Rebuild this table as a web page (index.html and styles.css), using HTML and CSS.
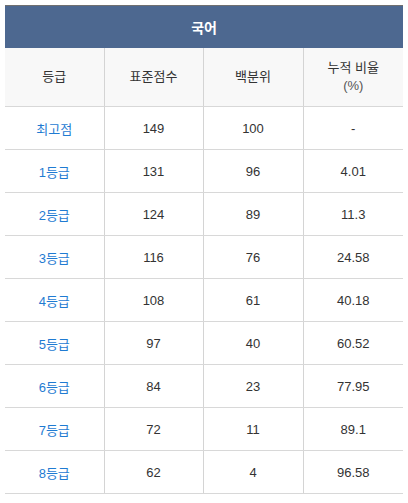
FILE: index.html
```html
<!DOCTYPE html>
<html lang="ko">
<head>
<meta charset="utf-8">
<link rel="stylesheet" href="styles.css">
</head>
<body>
<div class="wrap">
<table class="grade">
  <colgroup><col class="c1"><col class="c2"><col class="c3"><col class="c4"></colgroup>
  <thead>
    <tr class="title"><th colspan="4">국어</th></tr>
    <tr class="heads">
      <th>등급</th><th>표준점수</th><th>백분위</th><th>누적 비율<br><span class="pct">(%)</span></th>
    </tr>
  </thead>
  <tbody>
    <tr><td class="lv">최고점</td><td>149</td><td>100</td><td>-</td></tr>
    <tr><td class="lv">1등급</td><td>131</td><td>96</td><td>4.01</td></tr>
    <tr><td class="lv">2등급</td><td>124</td><td>89</td><td>11.3</td></tr>
    <tr><td class="lv">3등급</td><td>116</td><td>76</td><td>24.58</td></tr>
    <tr><td class="lv">4등급</td><td>108</td><td>61</td><td>40.18</td></tr>
    <tr><td class="lv">5등급</td><td>97</td><td>40</td><td>60.52</td></tr>
    <tr><td class="lv">6등급</td><td>84</td><td>23</td><td>77.95</td></tr>
    <tr><td class="lv">7등급</td><td>72</td><td>11</td><td>89.1</td></tr>
    <tr><td class="lv">8등급</td><td>62</td><td>4</td><td>96.58</td></tr>
  </tbody>
</table>
</div>
</body>
</html>
```
FILE: styles.css
```css
html, body { margin: 0; padding: 0; background: #fff; }
.wrap { padding: 5px; }
.grade {
  width: 398px;
  border-collapse: collapse;
  table-layout: fixed;
  font-family: "Liberation Sans", "Noto Sans CJK KR", sans-serif;
  font-size: 13px;
  color: #333;
}
.c1 { width: 99px; }
.c2 { width: 99px; }
.c3 { width: 100px; }
.c4 { width: 100px; }
.title th {
  background: #4d6890;
  color: #fff;
  font-weight: bold;
  font-size: 14px;
  height: 42px;
  padding: 0;
  border-top: 1px solid #707070;
  text-align: center;
}
.heads th {
  background: #f8f8f8;
  font-weight: normal;
  height: 58px;
  padding: 0;
  line-height: 18px;
  border-bottom: 1px solid #d8d8d8;
  text-align: center;
  color: #333;
}
.heads th + th, td + td { border-left: 1px solid #d4d4d4; }
.pct { color: #555; }
td {
  height: 42px;
  padding: 0;
  text-align: center;
  border-bottom: 1px solid #d8d8d8;
}
td.lv { color: #1f7bd2; }
```
